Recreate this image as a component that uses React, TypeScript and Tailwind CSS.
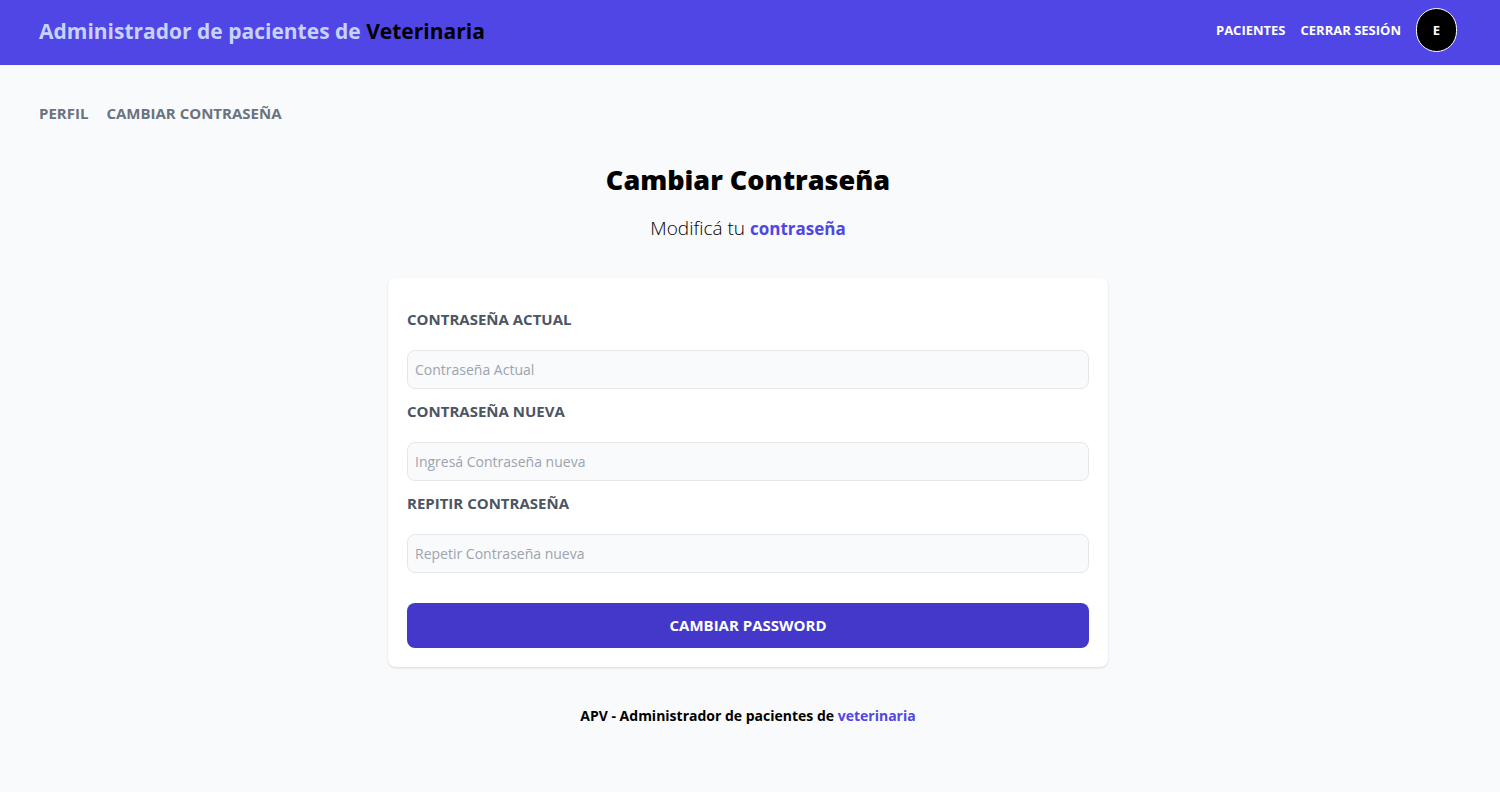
import { useState } from "react";
import type { FormEvent } from "react";

type Field = { id: string; label: string; placeholder: string };

const fields: Field[] = [
  { id: "pwd_actual", label: "Contraseña Actual", placeholder: "Contraseña Actual" },
  { id: "pwd_nuevo", label: "Contraseña Nueva", placeholder: "Ingresá Contraseña nueva" },
  { id: "pwd_repetir", label: "Repitir Contraseña", placeholder: "Repetir Contraseña nueva" },
];

function Header() {
  return (
    <header className="bg-[#4f46e5]">
      <div className="flex items-start justify-between pt-2 pr-[43px] pb-[13px] pl-[39px]">
        <h1 className="pt-2 text-[21px] leading-[30px] font-bold text-[#c7d2fe]">
          Administrador de pacientes de <span className="text-black">Veterinaria</span>
        </h1>
        <nav className="flex items-center gap-[15px] text-[13px] leading-5 font-bold text-white uppercase">
          <a href="#pacientes">Pacientes</a>
          <button type="button" className="font-bold uppercase">
            Cerrar sesión
          </button>
          <a
            href="#perfil"
            className="flex h-11 w-[41px] items-center justify-center rounded-full border border-white bg-black"
          >
            E
          </a>
        </nav>
      </div>
    </header>
  );
}

function PasswordForm() {
  const [values, setValues] = useState<Record<string, string>>({});
  const onSubmit = (e: FormEvent) => e.preventDefault();

  return (
    <form
      onSubmit={onSubmit}
      className="mx-auto mt-9 w-full max-w-[720px] rounded-lg bg-white px-[19px] pt-[30px] pb-[19px] shadow-[0_1px_3px_0_rgba(0,0,0,0.1),0_1px_2px_-1px_rgba(0,0,0,0.1)]"
    >
      {fields.map((f) => (
        <div key={f.id} className="mb-[11px]">
          <label
            htmlFor={f.id}
            className="block text-[15px] leading-[22px] font-bold text-[#4b5563] uppercase"
          >
            {f.label}
          </label>
          <input
            id={f.id}
            type="password"
            placeholder={f.placeholder}
            value={values[f.id] ?? ""}
            onChange={(e) => setValues({ ...values, [f.id]: e.target.value })}
            className="mt-5 block h-[39px] w-full rounded-lg border border-[#e5e7eb] bg-[#f9fafb] px-[7px] text-[14px] placeholder:text-[#9ca3af]"
          />
        </div>
      ))}
      <button
        type="submit"
        className="mt-[30px] block w-full rounded-lg bg-[#4338ca] pt-[11px] pb-3 text-[15px] leading-[22px] font-bold text-white uppercase"
      >
        Cambiar password
      </button>
    </form>
  );
}

export default function App() {
  return (
    <div className="min-h-screen bg-[#f9fafb] font-['Open_Sans','Noto_Sans',sans-serif] text-black">
      <Header />
      <main className="pt-[37px] pr-[43px] pl-[39px]">
        <nav className="flex gap-[18px] text-[15px] leading-[22px] font-bold text-[#6b7280] uppercase">
          <a href="#perfil">Perfil</a>
          <a href="#cambiar">Cambiar contraseña</a>
        </nav>
        <h2 className="mt-[38px] text-center text-[27px] leading-9 font-extrabold">
          Cambiar Contraseña
        </h2>
        <p className="mt-[17px] text-center text-[19px] leading-[27px] font-light">
          Modificá tu{" "}
          <span className="text-[17px] font-bold text-[#4f46e5]">contraseña</span>
        </p>
        <PasswordForm />
      </main>
      <footer className="py-[37px] pr-[43px] pl-[39px] text-center text-[14px] leading-[23px] font-bold">
        APV - Administrador de pacientes de <span className="text-[#4f46e5]">veterinaria</span>
      </footer>
    </div>
  );
}
